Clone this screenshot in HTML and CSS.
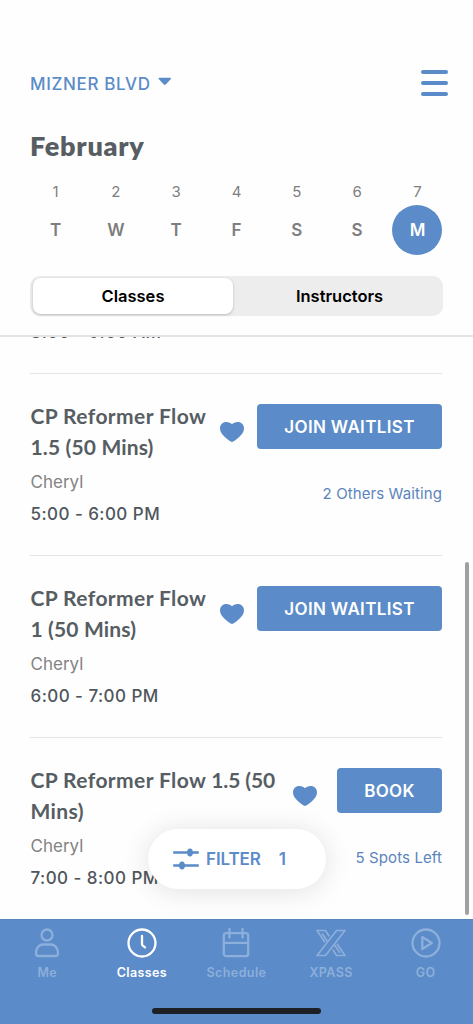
FILE: index.html
```html
<!DOCTYPE html>
<html lang="en">
<head>
<meta charset="utf-8">
<meta name="viewport" content="width=device-width, initial-scale=1">
<title>Classes</title>
<link rel="stylesheet" href="styles.css">
</head>
<body>
<svg class="defs" width="0" height="0">
  <symbol id="heart" viewBox="0 0 24 20"><path d="M12 20C9.500 19 0 13 0 6.500C0 2.500 2.900 0 6.200 0C9 0 11 1.200 12 2.300C13 1.200 15 0 17.800 0C21.100 0 24 2.500 24 6.500C24 13 14.500 19 12 20Z" fill="currentColor"/></symbol>
</svg>
<div class="app">
  <header class="header">
    <div class="topbar">
      <div class="location"><span class="location-name">MIZNER BLVD</span>
        <svg class="caret" width="14" height="9" viewBox="0 0 14 9"><path d="M1.200.800H12.300Q13.500 1 12.800 2L8 7.200Q6.800 8.200 5.600 7.200L.700 2Q.100 1 1.200.800Z" fill="currentColor"/></svg>
      </div>
      <div class="menu"><span></span><span></span><span></span></div>
    </div>
    <h1 class="month">February</h1>
    <div class="week">
      <div class="day"><span class="num">1</span><span class="letter">T</span></div>
      <div class="day"><span class="num">2</span><span class="letter">W</span></div>
      <div class="day"><span class="num">3</span><span class="letter">T</span></div>
      <div class="day"><span class="num">4</span><span class="letter">F</span></div>
      <div class="day"><span class="num">5</span><span class="letter">S</span></div>
      <div class="day"><span class="num">6</span><span class="letter">S</span></div>
      <div class="day"><span class="num">7</span><span class="letter selected">M</span></div>
    </div>
    <div class="segments"><div class="segment active">Classes</div><div class="segment">Instructors</div></div>
  </header>

  <main class="list">
    <article class="card"><div class="info"><p class="time">8:00 - 9:00 AM</p></div></article>
    <article class="card">
      <div class="info"><h2 class="title">CP Reformer Flow<br><span class="length">1.5 (50 Mins)</span></h2><p class="teacher">Cheryl</p><p class="time">5:00 - 6:00 PM</p></div>
      <svg class="heart"><use href="#heart"/></svg>
      <div class="action"><button class="button">JOIN WAITLIST</button><span class="note">2 Others Waiting</span></div>
    </article>
    <article class="card">
      <div class="info"><h2 class="title">CP Reformer Flow<br><span class="length">1 (50 Mins)</span></h2><p class="teacher">Cheryl</p><p class="time">6:00 - 7:00 PM</p></div>
      <svg class="heart"><use href="#heart"/></svg>
      <div class="action"><button class="button">JOIN WAITLIST</button></div>
    </article>
    <article class="card">
      <div class="info"><h2 class="title">CP Reformer Flow<span class="length tight"> 1.5 (50</span><br>Mins)</h2><p class="teacher">Cheryl</p><p class="time">7:00 - 8:00 PM</p></div>
      <svg class="heart"><use href="#heart"/></svg>
      <div class="action short"><button class="button">BOOK</button><span class="note">5 Spots Left</span></div>
    </article>
    <div class="scrollbar"></div>
    <div class="filter">
      <svg width="27" height="22" viewBox="0 0 27 22" fill="currentColor"><path d="M.200 3.300H25.800v2.400H.200zM.200 16.300H25.800v2.400H.200z"/><ellipse cx="17" cy="4.500" rx="2.900" ry="3.900"/><ellipse cx="9" cy="17.500" rx="2.900" ry="3.900"/></svg>
      <span class="filter-label">FILTER</span><span class="filter-count">1</span>
    </div>
  </main>

  <nav class="tabs">
    <div class="tab"><svg viewBox="0 0 30 30"><circle cx="15" cy="7" r="5.500"/><path d="M4 25.500C4 19 8 16.500 11 16.500H19C22 16.500 26 19 26 25.500Q26 28 23.500 28H6.500Q4 28 4 25.500Z"/></svg><span>Me</span></div>
    <div class="tab current"><svg viewBox="0 0 30 30"><circle cx="15" cy="15" r="13.500"/><path d="M15 8V16Q15 17 15.800 17.600L18 19.300"/></svg><span>Classes</span></div>
    <div class="tab"><svg viewBox="0 0 30 30"><rect x="2.800" y="5.200" width="24.400" height="23" rx="2.500"/><path d="M3 14.800H27M8.500 1V9.500M21.500 1V9.500"/></svg><span>Schedule</span></div>
    <div class="tab"><svg class="xpass" viewBox="0 0 30 30"><path d="M20.500 2.500H29L9.500 27.500H1ZM13.300 8.500L9.500 2.500H1L9 14.200M6 5.500L11.200 13M16.800 21.500L20.500 27.500H29L21 15.800M18.500 17L24 24.800"/></svg><span>XPASS</span></div>
    <div class="tab"><svg viewBox="0 0 30 30"><circle cx="15" cy="15" r="13.500"/><path d="M11.300 9V21L20.800 15Z"/></svg><span>GO</span></div>
    <div class="home"></div>
  </nav>
</div>
</body>
</html>
```
FILE: styles.css
```css
* { box-sizing: border-box; }
body, h1, h2, p { margin: 0; }
body { background: #fefefe; font-family: Inter, "Liberation Sans", sans-serif; color: #565d63; }
.defs { display: block; }
.app { width: 473px; height: 1024px; display: flex; flex-direction: column; overflow: hidden; }
.header { height: 337px; flex: none; padding: 66px 30px 0; border-bottom: 2px solid #e3e3e3; }
.topbar { height: 34px; display: flex; justify-content: space-between; align-items: center; color: #5b8bc8; }
.location { display: flex; align-items: center; gap: 7px; padding-top: 1px; font-size: 17px; font-weight: 500; letter-spacing: .65px; }
.caret { margin-bottom: 4px; }
.menu { width: 27px; margin-right: -5px; display: grid; gap: 7px; }
.menu span { height: 4px; border-radius: 2px; background: #5b8bc8; }
.month { margin-top: 28px; font: 800 27px/36px Lato, sans-serif; letter-spacing: .75px; }
.week { display: flex; justify-content: space-between; margin-top: 18px; }
.day { width: 51px; display: flex; flex-direction: column; align-items: center; color: #7e7e80; }
.num { font-size: 15px; line-height: 20px; }
.letter { width: 50px; height: 50px; margin-top: 3px; display: grid; place-items: center; font-size: 17px; font-weight: 600; }
.selected { border-radius: 50%; background: #5b8bc8; color: #fff; }
.segments { display: flex; height: 40px; margin-top: 21px; padding: 2px 3px; border-radius: 10px; background: #ededed; }
.segment { flex: 1; display: grid; place-items: center; padding-left: 6px; font-size: 16.500px; font-weight: 600; color: #000; }
.segment.active { flex: 0 0 200px; padding-left: 0; border-radius: 8px; background: #fff; box-shadow: 0 1px 3px #00000038; }
.list { position: relative; flex: 1; min-height: 0; display: flex; flex-direction: column; justify-content: flex-end; overflow: hidden; padding: 0 31px 0 30px; }
.card { flex: none; display: flex; align-items: flex-start; height: 182px; padding-top: 28px; border-bottom: 1px solid #e4e4e4; }
.card:nth-child(4) { margin-bottom: -1px; }
.info { flex: 1; min-width: 0; height: 128px; padding-left: .5px; display: flex; flex-direction: column; justify-content: flex-end; white-space: nowrap; }
.title { font: 700 21px/31px Lato, sans-serif; letter-spacing: .4px; }
.length { letter-spacing: .15px; }
.length.tight { letter-spacing: -.1px; }
.teacher { margin-top: 4px; font-size: 17px; line-height: 32px; color: #838385; }
.time { font-size: 17px; font-weight: 500; line-height: 32px; letter-spacing: .45px; color: #50565c; }
.heart { flex: none; width: 24px; height: 20px; margin: 20px 13px 0 0; color: #5b8bc8; }
.action { flex: none; width: 185px; display: flex; flex-direction: column; align-items: flex-end; padding-top: 2px; }
.action.short { width: 105px; margin-left: 7px; }
.button { width: 100%; height: 45px; padding: 0; border: 0; border-radius: 4px; background: #5b8bc8; color: #fff; font: 600 17px/46px Inter, sans-serif; letter-spacing: .35px; }
.note { margin-top: 34px; font-size: 15px; line-height: 22px; letter-spacing: .1px; color: #5b84bc; white-space: nowrap; }
.scrollbar { position: absolute; right: 4px; top: 225px; width: 4px; height: 353px; border-radius: 2px; background: #a0a0a0; }
.filter { position: absolute; left: 148px; bottom: 30px; width: 178px; height: 60px; padding-left: 25px; display: flex; align-items: center; border-radius: 30px; background: #fff; box-shadow: 0 2px 28px #0000001f; color: #5b8bc8; font-size: 17px; font-weight: 600; }
.filter-label { margin-left: 6px; letter-spacing: -.1px; }
.filter-count { margin-left: 18px; }
.tabs { position: relative; flex: 0 0 105px; padding-top: 8px; display: flex; background: #5b8bc8; border-top: 1px solid #5584be; }
.tab { flex: 1; display: flex; flex-direction: column; align-items: center; color: #8dafdb; font-size: 12.500px; font-weight: 600; line-height: 16px; letter-spacing: .4px; }
.tab svg { width: 30px; height: 30px; margin-bottom: 7px; fill: none; stroke: currentColor; stroke-width: 2.300; stroke-linecap: round; stroke-linejoin: round; }
.tab .xpass { stroke-width: 1.700; stroke-linecap: butt; stroke-linejoin: miter; }
.tab.current { color: #fff; }
.home { position: absolute; left: 152px; bottom: 10px; width: 169px; height: 6px; border-radius: 3px; background: #1d2024; }
```
